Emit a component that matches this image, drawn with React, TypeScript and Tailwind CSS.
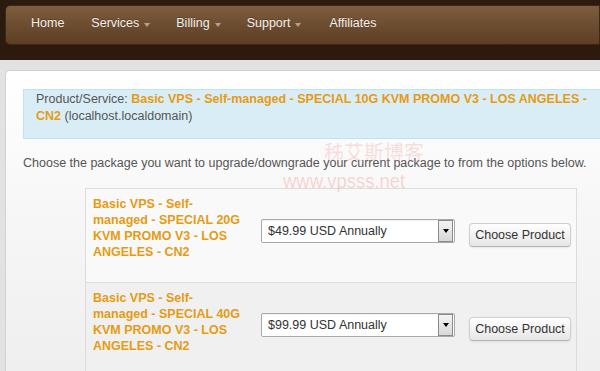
import React from "react";

function Caret() {
  return (
    <span className="ml-[5px] inline-block w-0 h-0 border-l-[3px] border-r-[3px] border-t-[4px] border-l-transparent border-r-transparent border-t-[#b3a18f] translate-y-[1px]" />
  );
}

function Select({ label }: { label: string }) {
  return (
    <div className="w-[194px] h-[24px] bg-white border border-[#a9a9a9] rounded-[2px] flex items-center shadow-[inset_0_1px_1px_rgba(0,0,0,0.06)]">
      <span className="flex-1 pl-[6px] text-[#333] text-[12.5px] leading-none">{label}</span>
      <span className="w-[15px] h-[22px] mr-[1px] border border-[#8a8a8a] bg-gradient-to-b from-[#f4f4f4] to-[#d8d8d8] flex items-center justify-center">
        <span className="w-0 h-0 border-l-[3.5px] border-r-[3.5px] border-t-[4px] border-l-transparent border-r-transparent border-t-black" />
      </span>
    </div>
  );
}

function Button() {
  return (
    <div className="w-[102px] h-[24px] rounded-[4px] border border-[#cfcfcf] border-b-[#b5b5b5] bg-gradient-to-b from-white to-[#e6e6e6] shadow-[0_1px_2px_rgba(0,0,0,0.08)] flex items-center justify-center text-[12.5px] text-[#333] leading-none">
      Choose Product
    </div>
  );
}

function Row({ size, price, bg }: { size: string; price: string; bg: string }) {
  return (
    <div className={`flex h-[94px] border-b border-[#dcdcdc] ${bg}`}>
      <div className="w-[167px] pl-[7px] pr-[8px] pt-[7px] text-[12.5px] leading-[16px] font-bold text-[#e69b14]">
        Basic VPS - Self-managed - SPECIAL {size} KVM PROMO V3 - LOS ANGELES - CN2
      </div>
      <div className="ml-[8px] mt-[30px]">
        <Select label={price} />
      </div>
      <div className="ml-[14px] mt-[34px]">
        <Button />
      </div>
    </div>
  );
}

export default function App() {
  return (
    <div className="relative w-[600px] h-[371px] overflow-hidden bg-[#e2e2e2] font-['Liberation_Sans',Arial,sans-serif]">
      <div className="h-[60px] bg-[#2b1a0d] pt-[5px] pl-[5px]">
        <div className="h-[40px] rounded-l-[5px] border border-[#3d2716] bg-gradient-to-b from-[#7d5d3d] to-[#5c3e25] flex items-center pl-[11px] pb-[3px] text-[12.5px] text-[#f4f0ec] [text-shadow:0_-1px_0_rgba(0,0,0,0.25)]">
          <span className="px-[14px]">Home</span>
          <span className="pl-[13px] pr-[14px] flex items-center">Services<Caret /></span>
          <span className="pl-[12px] pr-[14px] flex items-center">Billing<Caret /></span>
          <span className="pl-[12px] pr-[14px] flex items-center">Support<Caret /></span>
          <span className="px-[14px]">Affiliates</span>
        </div>
      </div>
      <div className="pt-[10px] pl-[5px]">
        <div className="w-[640px] h-[320px] rounded-tl-[5px] border border-[#d2d2d2] bg-gradient-to-b from-white via-[#f6f6f6] to-[#eeeeee] pt-[18px] pl-[17px]">
          <div className="w-[590px] border border-[#bfe3f0] bg-[#d9edf7] pl-[12px] pr-[12px] pt-[1px] pb-[13px] text-[12.5px] leading-[17px] text-[#555]">
            Product/Service:{" "}
            <span className="font-bold text-[#e69b14]">
              Basic VPS - Self-managed - SPECIAL 10G KVM PROMO V3 - LOS ANGELES - CN2
            </span>{" "}
            (localhost.localdomain)
          </div>
          <p className="mt-[16px] text-[12.5px] leading-[17px] text-[#555] whitespace-nowrap">
            Choose the package you want to upgrade/downgrade your current package to from the options below.
          </p>
          <div className="mt-[16px] ml-[62px] w-[492px] border-t border-l border-r border-[#dcdcdc]">
            <Row size="20G" price="$49.99 USD Annually" bg="bg-[#f9f9f9]" />
            <Row size="40G" price="$99.99 USD Annually" bg="bg-[#f0f0f0]" />
          </div>
        </div>
      </div>
      <div className="absolute left-[324px] top-[142px] text-[20px] leading-none text-[rgba(240,110,110,0.22)] font-['Noto_Sans_CJK_SC',sans-serif] pointer-events-none">
        秭艾斯博客
      </div>
      <div className="absolute left-[283px] top-[170px] text-[21px] leading-none text-[rgba(240,110,110,0.28)] scale-x-[0.88] origin-left pointer-events-none">
        www.vpsss.net
      </div>
    </div>
  );
}
